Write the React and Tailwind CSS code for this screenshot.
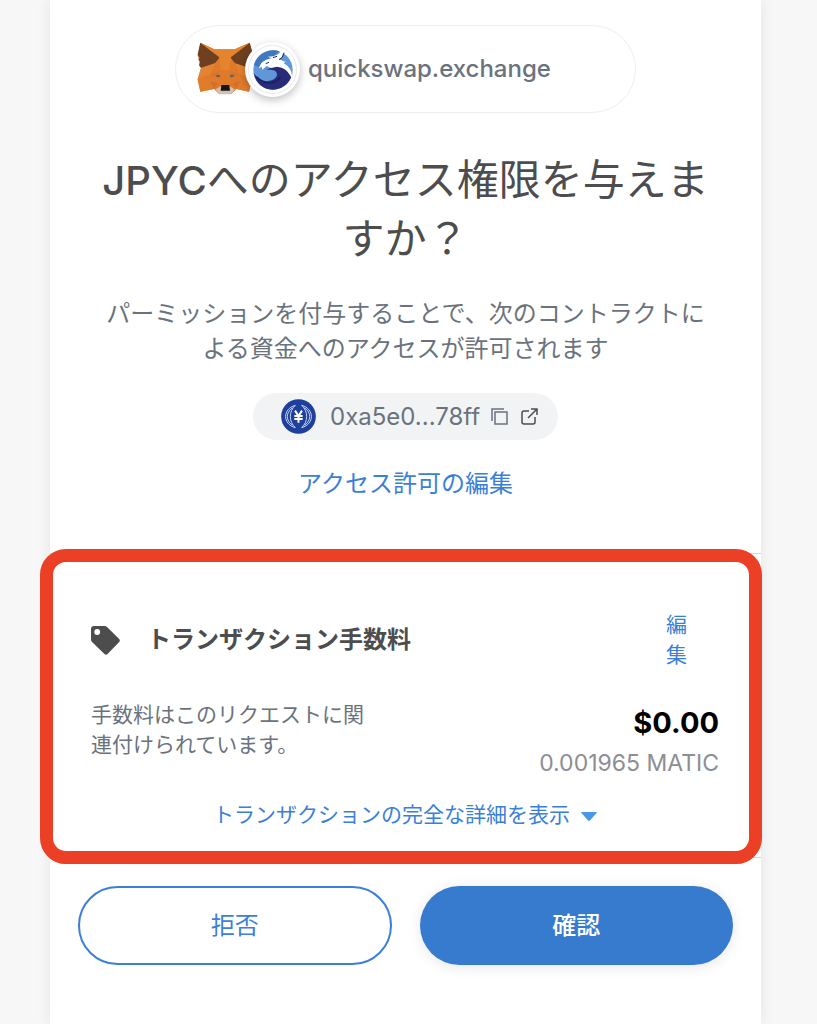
import { useState } from 'react'

function FoxLogo() {
  return (
    <svg viewBox="0 0 168 162" className="h-[54px] w-[56px]" aria-hidden="true">
      <path d="M10 2 L52 22 H113 L158 2 L168 40 L156 78 L165 112 L156 149 L119 141 L103 156 H66 L51 141 L10 149 L2 112 L12 78 L2 38 Z" fill="#E07A28" />
      {/* ears */}
      <path d="M10 2 L68 46 L54 64 L12 78 L6 70 L9 58 L4 54 L8 48 L2 38 Z" fill="#6E4020" />
      <path d="M158 2 L100 46 L114 64 L156 78 L162 70 L159 58 L164 54 L160 48 L168 38 Z" fill="#6E4020" />
      {/* face */}
      <path d="M10 2 L52 22 H113 L158 2 L101 46 L97 84 H71 L67 46 Z" fill="#E5842F" />
      <path d="M12 78 L54 64 L40 96 L2 112 Z" fill="#E38334" />
      <path d="M156 78 L114 64 L128 96 L165 112 Z" fill="#E38334" />
      <path d="M2 112 H44 L51 141 L10 149 Z" fill="#E07D2C" />
      <path d="M165 112 H124 L119 141 L156 149 Z" fill="#E07D2C" />
      <path d="M66 87 L40 100 L66 105 Z" fill="#D27434" />
      <path d="M102 87 L128 100 L102 105 Z" fill="#D27434" />
      <path d="M39 118 L62 124 L51 141 Z" fill="#D07030" />
      <path d="M129 118 L106 124 L119 141 Z" fill="#D07030" />
      {/* eyes */}
      <path d="M56 100 L68 98 L69 106 L60 105 Z" fill="#56616B" />
      <path d="M112 100 L100 98 L99 106 L108 105 Z" fill="#56616B" />
      {/* muzzle */}
      <path d="M56 142 L73 132 H97 L113 142 L103 157 H66 Z" fill="#CFC0B4" />
      <path d="M73 129 H97 L99 146 H71 Z" fill="#161616" />
    </svg>
  )
}

function DragonLogo() {
  return (
    <svg viewBox="0 0 120 126" className="h-[42px] w-[40px]" aria-hidden="true">
      <circle cx="60" cy="66" r="59" fill="#5F97D8" />
      <path d="M3 50 A59 59 0 0 1 78 10 L58 28 L30 38 L18 58 Z" fill="#3F78BD" />
      {/* wave */}
      <path d="M52 60 C84 48 110 66 118 78 C108 112 82 125 58 125 C28 124 6 102 2 74 C14 96 38 104 56 97 C74 90 78 74 62 67 C58 65 48 64 40 66 Z" fill="#282B78" />
      <path d="M10 86 C34 112 66 110 82 88" fill="none" stroke="#1D1F5D" strokeWidth="5" />
      {/* dragon head and neck */}
      <path d="M17 61 L25 45 L40 35 L56 31 L44 26 L62 25 L78 17 L87 0 L92 12 L87 27 L78 34 L98 42 L92 46 C108 54 119 70 118 94 C106 68 92 58 72 56 L54 60 L41 54 L28 65 L26 56 Z" fill="#fff" />
      <path d="M38 47 L48 43 M60 29 L72 25" fill="none" stroke="#1D2E55" strokeWidth="3" />
      <path d="M93 14 L88 28 L78 35" fill="none" stroke="#16284D" strokeWidth="3" />
    </svg>
  )
}

function YenLogo() {
  return (
    <svg viewBox="0 0 105 105" className="h-[35px] w-[35px]" aria-hidden="true">
      <circle cx="52.5" cy="52.5" r="52" fill="#1E3F9C" />
      <g fill="none" stroke="#C9D6F4" strokeWidth="3" strokeLinejoin="round">
        <path d="M43 19 C4 30 4 75 43 86 C23 68 23 37 43 19 Z" />
        <path d="M62 19 C101 30 101 75 62 86 C82 68 82 37 62 19 Z" />
        <path d="M34 27 C14 40 14 65 34 78 M71 27 C91 40 91 65 71 78" />
      </g>
      <path d="M42 35 L52.5 51 L63 35 M40 51 H65 M40 60 H65 M52.5 51 V71" fill="none" stroke="#fff" strokeWidth="6" />
    </svg>
  )
}

function CopyIcon() {
  return (
    <svg viewBox="0 0 17 17" className="h-[17px] w-[17px]" fill="none" stroke="#6A737D" strokeWidth="1.5" aria-hidden="true">
      <path d="M1 13 V1 H13" />
      <path d="M4 4 H16 V16 H4 Z" />
    </svg>
  )
}

function ExternalIcon() {
  return (
    <svg viewBox="0 0 17 17" className="h-[17px] w-[17px]" fill="none" stroke="#4D4D4D" strokeWidth="1.5" aria-hidden="true">
      <path d="M8 3 H3 Q1 3 1 5 V14 Q1 16 3 16 H12 Q14 16 14 14 V9" />
      <path d="M7 10 L15.5 1.5 M10 1 H16 V7" />
    </svg>
  )
}

function TagIcon() {
  return (
    <svg viewBox="0 0 28 28" className="h-[29px] w-[29px]" aria-hidden="true">
      <path
        fillRule="evenodd"
        fill="#4D4D4D"
        d="M3 0 H13 Q14.500 0 15.500 1 L27.200 12.500 Q28.500 14 27.200 15.500 L16 27 Q14.500 28.500 13 27 L1 15.500 Q0 14.500 0 13 V3 Q0 0 3 0 Z M6 3 A2.800 2.800 0 1 0 6 8.600 A2.800 2.800 0 1 0 6 3 Z"
      />
    </svg>
  )
}

export default function App() {
  const [showDetails, setShowDetails] = useState(false)

  return (
    <div className="min-h-screen bg-[#f7f7f7] pl-[50px] pr-[56px] font-['Inter','Noto_Sans_CJK_JP',sans-serif]">
      <main className="min-h-screen bg-white pt-[25px] shadow-[0_0_14px_rgba(0,0,0,0.08)]">
        {/* Site */}
        <header className="mx-auto flex h-[88px] w-[461px] max-w-full items-center rounded-full border border-[#eceef0] pl-[21px]">
          <FoxLogo />
          <div className="z-10 -ml-[8px] flex size-[55px] items-center justify-center rounded-full bg-white shadow-[0_3px_8px_rgba(0,0,0,0.25)]">
            <div className="flex size-[49px] items-center justify-center rounded-full border border-[#e6e8ea]">
              <DragonLogo />
            </div>
          </div>
          <span className="ml-[8px] text-[24px] font-medium text-[#6a737d]">quickswap.exchange</span>
        </header>

        <h1 className="mx-auto mt-[38px] max-w-[620px] text-center text-[42px] leading-[58px] text-[#4d4d4d]">
          <span className="text-[40px] font-medium">JPYC</span>へのアクセス権限を与えますか？
        </h1>

        <p className="mx-auto mt-7 max-w-[610px] text-center text-[24px] leading-[35px] text-[#6a737d]">
          パーミッションを付与することで、次のコントラクトによる資金へのアクセスが許可されます
        </p>

        {/* Contract address */}
        <div className="mx-auto mt-[27px] flex h-[47px] w-[305px] items-center rounded-full bg-[#f2f3f4] pl-[28px]">
          <YenLogo />
          <span className="ml-[14px] w-[148px] whitespace-nowrap text-[24px] leading-[36px] text-[#6a737d]">0xa5e0...78ff</span>
          <button type="button" aria-label="コピー" className="ml-[13px]">
            <CopyIcon />
          </button>
          <a href="#explorer" aria-label="エクスプローラーで表示" className="ml-[13px]">
            <ExternalIcon />
          </a>
        </div>

        <div className="mt-[26px] flex justify-center">
          <button type="button" className="text-[24px] leading-[36px] text-[#3a7fda]">アクセス許可の編集</button>
        </div>

        {/* Transaction fee */}
        <section className="relative mt-[51px] h-[305px] border-y border-[#d6d9dc] pl-[41px] pr-[42px] pt-[56px]">
          <div className="pointer-events-none absolute -left-[10px] -right-[1px] -top-[5px] h-[315px] rounded-[26px] border-[13px] border-[#eb4026]"></div>

          <div className="flex items-center">
            <TagIcon />
            <h2 className="ml-[27px] flex-1 text-[24px] font-bold text-[#4d4d4d]">トランザクション手数料</h2>
            <button type="button" className="mr-[32px] w-[21px] text-[21px] leading-[30px] text-[#3a7fda]">編集</button>
          </div>

          <div className="mt-[30px] flex justify-between">
            <p className="w-[275px] text-[21px] leading-[30px] text-[#6a737d]">
              手数料はこのリクエストに関連付けられています。
            </p>
            <div className="mt-[3px] text-right leading-[40px]">
              <div className="text-[29px] font-bold text-black">$0.00</div>
              <div className="text-[23px] text-[#8c8e94]">0.001965 MATIC</div>
            </div>
          </div>

          <div className="mt-[17px] flex justify-center">
            <button
              type="button"
              aria-expanded={showDetails}
              onClick={() => setShowDetails(!showDetails)}
              className="flex items-center gap-[11px] text-[21px] leading-[30px] text-[#3a7fda]"
            >
              トランザクションの完全な詳細を表示
              <svg viewBox="0 0 16 9" className="mt-[3px] h-[9px] w-[16px]" aria-hidden="true">
                <path d="M1 0 H15 Q16.500 0 15.500 1 L9 8.500 Q8 9.400 7 8.500 L0.500 1 Q-0.500 0 1 0 Z" fill="#4A98E8" />
              </svg>
            </button>
          </div>
        </section>

        <footer className="grid grid-cols-2 gap-[28px] px-[28px] pb-[59px] pt-[28px] text-[24px]">
          <button type="button" className="h-[79px] rounded-full border-2 border-[#3a7fda] text-[#3a7fda]">
            拒否
          </button>
          <button type="button" className="h-[79px] rounded-full bg-[#377bcf] font-medium text-white shadow-[0_2px_14px_rgba(0,0,0,0.1)]">
            確認
          </button>
        </footer>
      </main>
    </div>
  )
}
